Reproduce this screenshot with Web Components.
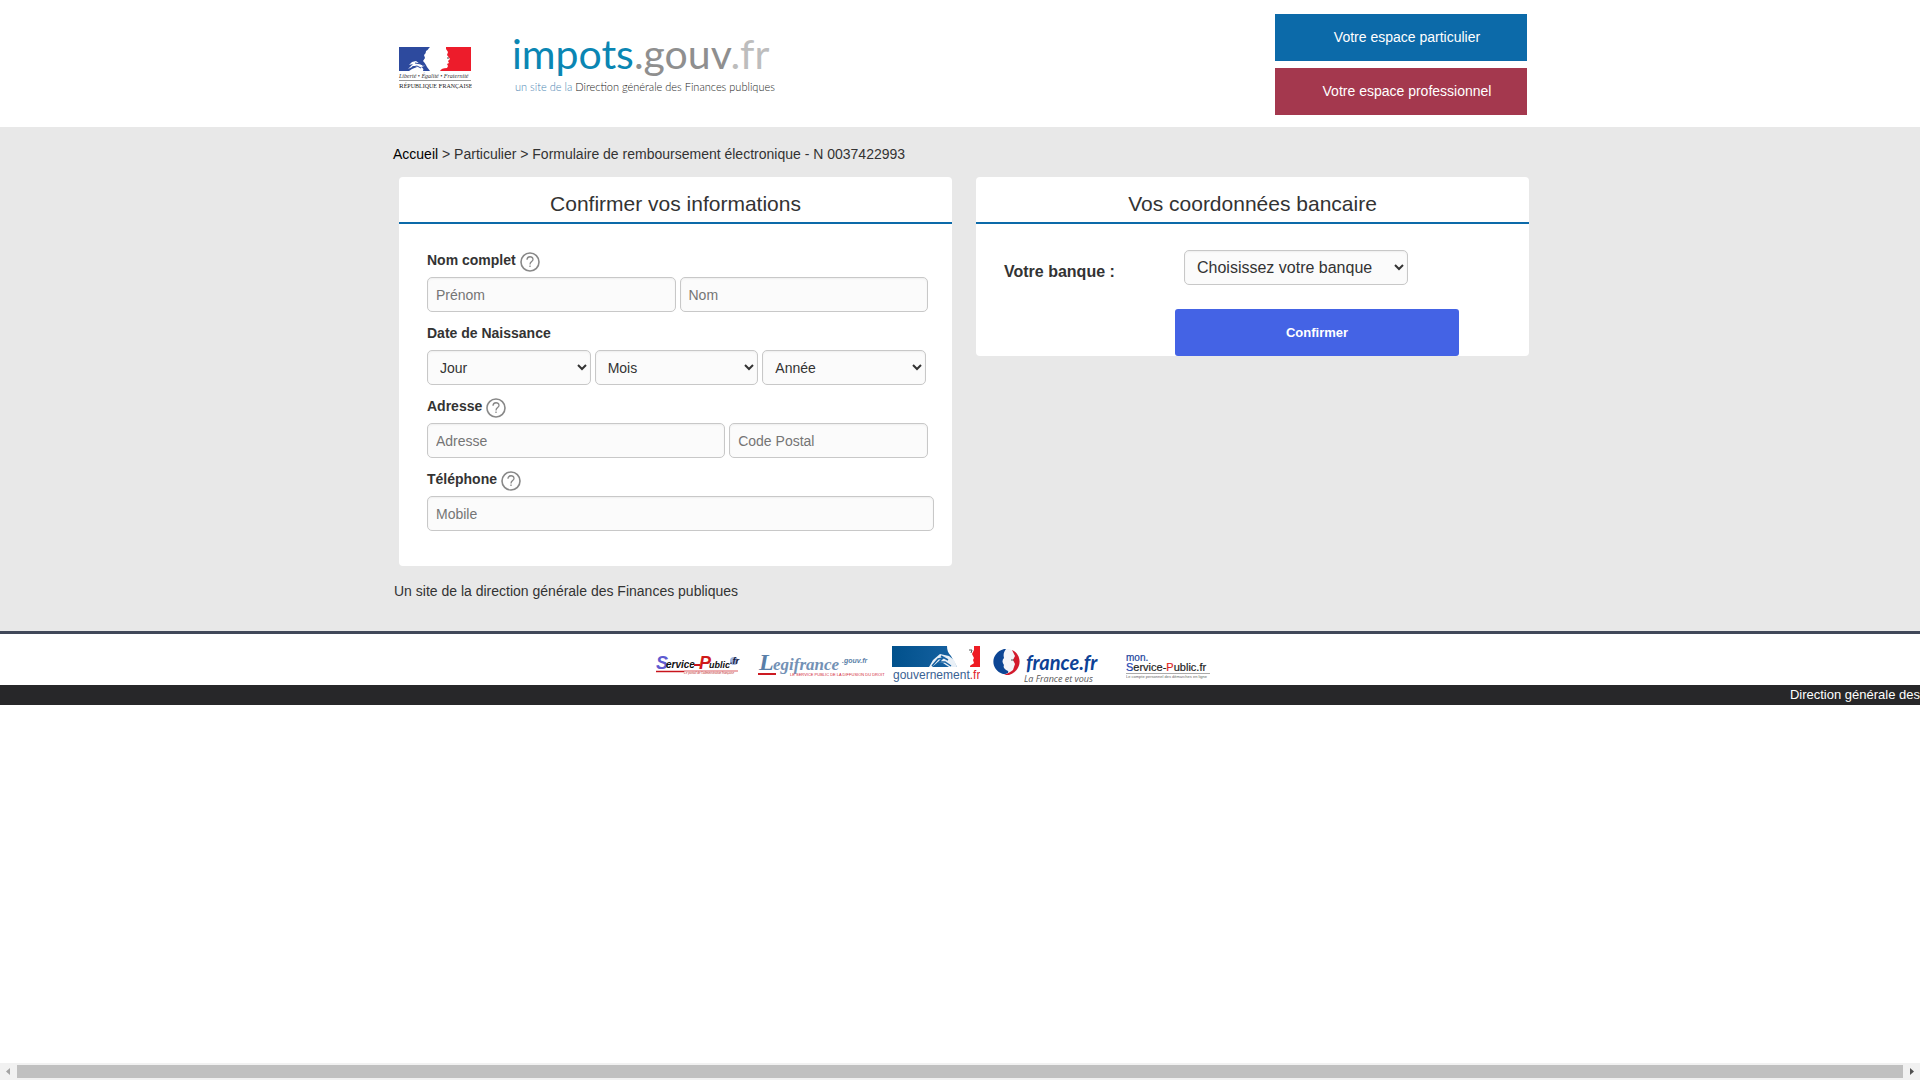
<!DOCTYPE html>
<html lang="fr">
<head>
<meta charset="utf-8">
<title>impots.gouv.fr - Formulaire de remboursement</title>
<style>
body { margin: 0; font: 14px/20px "Liberation Sans", Arial, sans-serif; color: #333; background: #fff; }
</style>
</head>
<body>
<impots-page></impots-page>

<template id="t-page">
<style>
:host { display: flex; flex-direction: column; min-height: 100vh; }
main { background: #e8e8e8; border-bottom: 3px solid #404859; }
.wrap { max-width: 1142px; margin: 0 auto; }
.cards { display: grid; grid-template-columns: 1fr 1fr; align-items: start; gap: 24px; padding: 0 2px 0 10px; }
.note { margin: 0; padding: 15px 4px 30px 5px; }
scroll-track { margin-top: auto; }
</style>
<site-header></site-header>
<main>
  <div class="wrap">
    <bread-crumb></bread-crumb>
    <div class="cards">
      <info-card><span slot="heading">Confirmer vos informations</span><identity-form></identity-form></info-card>
      <info-card><span slot="heading">Vos coordonnées bancaire</span><bank-form></bank-form></info-card>
    </div>
    <p class="note">Un site de la direction générale des Finances publiques</p>
  </div>
</main>
<site-footer></site-footer>
<scroll-track></scroll-track>
</template>

<template id="t-header">
<style>
:host { display: block; }
.wrap { display: flex; align-items: flex-start; max-width: 1134px; height: 127px; box-sizing: border-box; margin: 0 auto; padding: 14px 0 0 5px; }
svg { display: block; flex: none; }
.flag { margin: 32px 40px 0 0; }
.logo { margin-top: 4px; }
nav { display: flex; flex-direction: column; gap: 7px; width: 252px; margin-left: auto; }
a { box-sizing: border-box; height: 47px; line-height: 46px; padding-left: 12px; text-align: center; color: #fff; text-decoration: none; background: #0c6aa9; }
a + a { background: #a4384e; }
</style>
<header class="wrap">
  <svg class="flag" width="74" height="46" viewBox="0 0 74 46" role="img" aria-label="République Française">
    <path fill="#2d4a9e" d="M1 1h31c-2 2-2 3-4 4 0 2-1 3-2 4l1 3-2 3c2 2 3 4 4 6l3 4H25c1-2 0-3-2-4l4-1-5-2-4-3-4 1-3 3 4-1-5 5 6-3 3 1-5 2-3 2H1z"/>
    <path fill="none" stroke="#2d4a9e" d="M17 17l6 1 4 3M14 21l5-1 4 2"/>
    <path fill="#ed1c2b" d="M48 1h25v24H42c1-2 3-3 7-3l1-2-1-2 2-1-1-2 2-2-3-4 1-3-2-3z"/>
    <path stroke="#444" d="M49 12h2" fill="none"/>
    <text x="1" y="32" font-family="Liberation Serif, serif" font-style="italic" font-size="6" fill="#333">Liberté • Égalité • Fraternité</text>
    <path stroke="#999" d="M1 34.500h72"/>
    <text x="1" y="42" font-family="Liberation Serif, serif" font-size="7" fill="#222">R<tspan font-size="6">ÉPUBLIQUE </tspan>F<tspan font-size="6">RANÇAISE</tspan></text>
  </svg>
  <svg class="logo" width="270" height="84" viewBox="0 0 270 84" role="img" aria-label="impots.gouv.fr">
    <text x="0" y="51" font-family="Lato, sans-serif" font-size="41" fill="#0a86b3">impots<tspan fill="#8f8f8f">.gouv</tspan><tspan fill="#bdbdbd">.fr</tspan></text>
    <text x="3" y="73" font-family="Lato, sans-serif" font-size="11" font-weight="300" fill="#222"><tspan fill="#4d86b3">un site de la</tspan> Direction générale des Finances publiques</text>
  </svg>
  <nav><a href="#particulier">Votre espace particulier</a><a href="#professionnel">Votre espace professionnel</a></nav>
</header>
</template>

<template id="t-crumb">
<style>
:host { display: block; padding: 17px 4px 13px; }
a { color: #000; text-decoration: none; }
</style>
<nav><a href="#accueil">Accueil</a> &gt; Particulier &gt; Formulaire de remboursement électronique - N 0037422993</nav>
</template>

<template id="t-card">
<style>
:host { display: block; background: #fff; border-radius: 4px; }
h2 { margin: 0; border-bottom: 2px solid #0c6aa9; font-size: 21px; font-weight: 400; line-height: 54px; height: 45px; text-align: center; }
</style>
<h2><slot name="heading"></slot></h2>
<slot></slot>
</template>

<template id="t-identity">
<style>
:host { display: block; padding: 15px 18px 35px 28px; }
.label { display: flex; align-items: center; gap: 4px; height: 38px; box-sizing: border-box; padding-top: 4px; font-weight: 700; }
help-icon { margin-top: 4px; }
.row { display: grid; grid-template-columns: 1fr 1fr; gap: 4px; padding-right: 6px; }
.row.date { grid-template-columns: repeat(3, 1fr); padding-right: 8px; }
.row.address { grid-template-columns: 3fr 2fr; }
.row.full { grid-template-columns: 1fr; padding-right: 0; }
input, select { min-width: 0; height: 35px; box-sizing: border-box; border: 1px solid #c8c8c8; border-radius: 5px; background: #fbfbfb; box-shadow: inset 0 1px 2px #eee; padding: 0 8px; font: inherit; color: #333; }
input::placeholder { color: #757575; }
</style>
<form>
  <div class="label"><label for="prenom">Nom complet</label><help-icon></help-icon></div>
  <div class="row"><input id="prenom" placeholder="Prénom"><input aria-label="Nom" placeholder="Nom"></div>
  <div class="label"><label for="jour">Date de Naissance</label></div>
  <div class="row date">
    <select id="jour"><option>Jour</option></select>
    <select aria-label="Mois"><option>Mois</option></select>
    <select aria-label="Année"><option>Année</option></select>
  </div>
  <div class="label"><label for="adresse">Adresse</label><help-icon></help-icon></div>
  <div class="row address"><input id="adresse" placeholder="Adresse"><input aria-label="Code Postal" placeholder="Code Postal"></div>
  <div class="label"><label for="mobile">Téléphone</label><help-icon></help-icon></div>
  <div class="row full"><input id="mobile" type="tel" placeholder="Mobile"></div>
</form>
</template>

<template id="t-bank">
<style>
:host { display: block; padding: 26px 70px 0 28px; }
form { display: grid; grid-template-columns: 171px 1fr; row-gap: 24px; }
label { font-size: 16px; font-weight: 700; line-height: 44px; height: 35px; }
select { justify-self: start; width: 224px; margin-left: 9px; height: 35px; box-sizing: border-box; border: 1px solid #c8c8c8; border-radius: 5px; background: #fbfbfb; box-shadow: inset 0 1px 2px #eee; padding: 0 8px; font: inherit; font-size: 16px; color: #333; }
button { grid-column: 2; height: 47px; border: 0; border-radius: 3px; background: #4463e5; color: #fff; font: bold 13px "Liberation Sans", Arial, sans-serif; }
</style>
<form>
  <label for="banque">Votre banque :</label>
  <select id="banque"><option>Choisissez votre banque</option></select>
  <button type="button">Confirmer</button>
</form>
</template>

<template id="t-help">
<style>
:host { display: block; width: 20px; height: 20px; }
svg { display: block; }
</style>
<svg width="20" height="20" viewBox="0 0 20 20" fill="none" stroke="#888" role="img" aria-label="Aide">
  <circle cx="10" cy="10" r="9" stroke-width="1.600"/>
  <path stroke-width="1.300" d="M7 7.800c0-4 6-4 6-.4 0 2.200-3 2.300-3 5M10 13.600v1.500"/>
</svg>
</template>

<template id="t-footer">
<style>
:host { display: block; }
.logos { display: flex; justify-content: center; height: 51px; box-sizing: border-box; padding: 12px 54px 0 0; }
.logos a { display: block; }
svg { display: block; }
.g1 { margin-right: 17px; } .g2 { margin-right: 7px; } .g3 { margin-right: 13px; } .g4 { margin-right: 23px; }
.bar { height: 20px; overflow: hidden; background: #272729; color: #fff; font-size: 13px; text-align: right; white-space: nowrap; }
</style>
<footer>
  <div class="logos">
    <a class="g1" href="#service-public"><svg width="84" height="38" viewBox="0 0 84 38" font-family="Liberation Sans, sans-serif" font-weight="bold" font-style="italic">
      <text x="0" y="23" font-size="18" fill="#5f5bd0">S</text><text x="10" y="22" font-size="10" fill="#111">ervice</text>
      <path stroke="#c8141c" stroke-width="2" d="M38 19h6"/>
      <text x="43" y="23" font-size="18" fill="#d01a1a">P</text><text x="53" y="22" font-size="9" fill="#111">ublic</text>
      <circle cx="78" cy="15" r="4" fill="#9db0dc"/><text x="74" y="18" font-size="9" fill="#15203c">.fr</text>
      <path stroke="#c8141c" stroke-width="1.500" d="M0 25.500h28"/><path stroke="#c8141c" stroke-width=".7" d="M28 25h54"/>
      <text x="28" y="28" font-size="3" font-weight="400" fill="#b22">Le portail de l'administration française</text>
    </svg></a>
    <a class="g2" href="#legifrance"><svg width="128" height="38" viewBox="0 0 128 38" font-family="Liberation Serif, serif" font-weight="bold" font-style="italic">
      <text x="2" y="24" font-size="24" fill="#5a7fa8">L</text><text x="16" y="24" font-size="17" fill="#7391b5">egifrance</text>
      <text x="85" y="17" font-size="7" font-family="Liberation Sans, sans-serif" fill="#5a7fa8">.gouv.fr</text>
      <path stroke="#cc1a22" stroke-width="2" d="M1 28h18"/>
      <text x="33" y="30" font-size="4" font-weight="400" font-style="normal" font-family="Liberation Sans, sans-serif" fill="#d22838">LE SERVICE PUBLIC DE LA DIFFUSION DU DROIT</text>
    </svg></a>
    <a class="g3" href="#gouvernement"><svg width="88" height="38" viewBox="0 0 88 38">
      <defs><linearGradient id="b"><stop offset="0" stop-color="#01518c"/><stop offset="1" stop-color="#1762a2"/></linearGradient></defs>
      <path fill="url(#b)" d="M0 0h55c0 4 1 7 4 10l6 11H0z"/>
      <path fill="#e9f0f7" d="M37 21l4-7 7-6 9 2 5 4 3 7h-8l-6-4-5-1-6 5z"/>
      <path fill="none" stroke="#1762a2" stroke-width="1.500" d="M40 20l6-7 5-1-4 4 6 0 6 4M49 10l7 4"/>
      <path fill="#ee1c24" d="M82 0h6v21H78c0-3 3-2 4-4l-1-3 1-2-2-4 2-4z"/><path stroke="#555" fill="none" d="M77 4h3l-1 3"/>
      <text x="1" y="33" font-family="Liberation Sans, sans-serif" font-size="12" fill="#3a6293">gouvernement<tspan fill="#e1202b">.fr</tspan></text>
    </svg></a>
    <a class="g4" href="#france"><svg width="110" height="38" viewBox="0 0 110 38">
      <circle cx="14" cy="16" r="13" fill="#f3f4f8"/>
      <path fill="#0c4594" d="M11 3C-3 7-3 24 10 28c4 0 6-1 5-3-4-2-5-4-4-6-2-3-2-5 0-7-1-4 0-6 2-9z"/>
      <path fill="#d3192b" d="M19 4c11 5 10 21-3 25h-5c4-2 7-3 9-5l2-6-2-4 2-4z"/><path stroke="#555" fill="none" d="M18 14h3"/>
      <text x="33" y="24" font-family="Lato, sans-serif" font-weight="bold" font-style="italic" font-size="20" fill="#0d4296">france.fr</text>
      <text x="31" y="36" font-family="Open Sans, sans-serif" font-style="italic" font-size="9" fill="#555">La France et vous</text>
    </svg></a>
    <a href="#mon-service-public"><svg width="84" height="38" viewBox="0 0 84 38" font-family="Liberation Sans, sans-serif">
      <text x="0" y="15" font-size="10" fill="#1c439d" stroke="#1c439d" stroke-width=".2">mon.</text>
      <text x="0" y="25" font-size="11" fill="#222" stroke="#222" stroke-width=".2"><tspan fill="#1c43b0" stroke="#1c43b0">S</tspan>ervice-<tspan fill="#e02020" stroke="#e02020">P</tspan>ublic.fr</text>
      <path stroke="#aaa" d="M0 27.500h84"/>
      <text x="0" y="32" font-size="4" fill="#666">Le compte personnel des démarches en ligne</text>
    </svg></a>
  </div>
  <div class="bar">Direction générale des</div>
</footer>
</template>

<template id="t-scroll">
<style>
:host { display: flex; align-items: center; height: 17px; background: #f1f1f1; }
svg { display: block; flex: none; }
.thumb { flex: 1; height: 13px; background: #c0c0c0; }
</style>
<svg width="17" height="17"><path fill="#a3a3a3" d="M10 5v7L6 8.500z"/></svg>
<div class="thumb"></div>
<svg width="17" height="17"><path fill="#505050" d="M7 5v7l4-3.500z"/></svg>
</template>

<script>
const parts = {
  'help-icon': 't-help', 'scroll-track': 't-scroll', 'site-header': 't-header', 'bread-crumb': 't-crumb',
  'info-card': 't-card', 'identity-form': 't-identity', 'bank-form': 't-bank', 'site-footer': 't-footer',
  'impots-page': 't-page'
};
for (const [tag, id] of Object.entries(parts)) {
  customElements.define(tag, class extends HTMLElement {
    constructor() {
      super();
      this.attachShadow({ mode: 'open' }).append(document.getElementById(id).content.cloneNode(true));
    }
  });
}
</script>
</body>
</html>
